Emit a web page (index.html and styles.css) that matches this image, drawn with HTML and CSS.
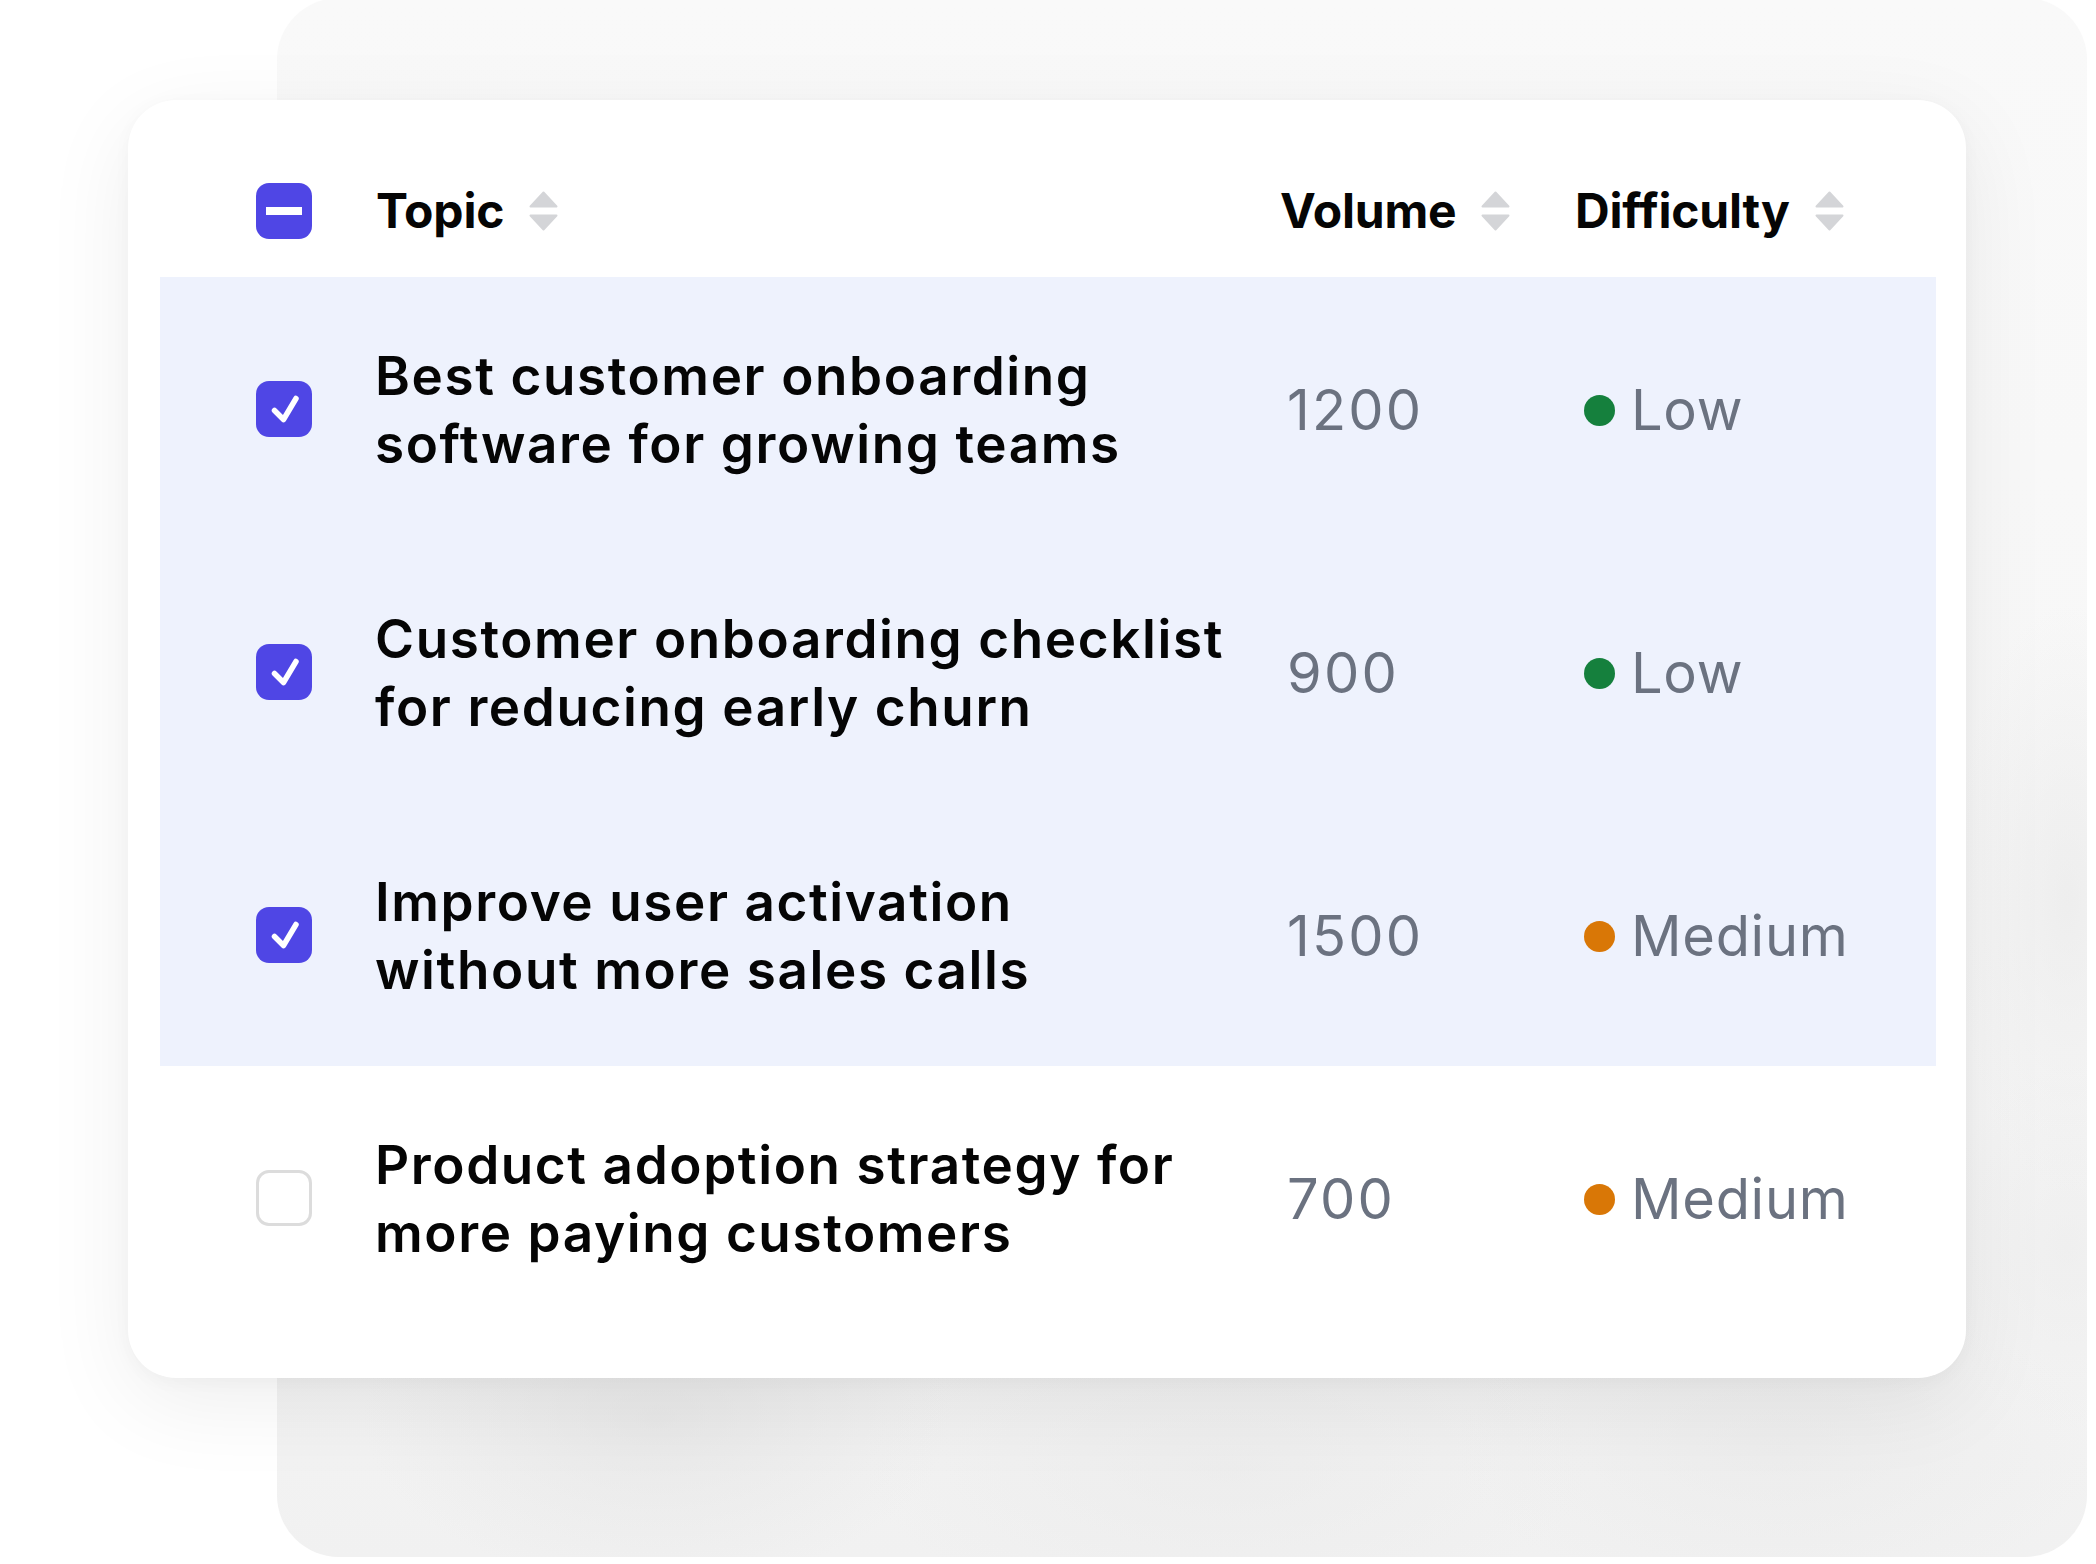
FILE: index.html
```html
<!DOCTYPE html>
<html lang="en">
<head>
<meta charset="utf-8">
<title>Topics</title>
<link rel="stylesheet" href="styles.css">
</head>
<body>
<div class="stage">
  <div class="panel"></div>
  <div class="card">
    <div class="row head">
      <div class="cell cell-check">
        <span class="cb cb-mixed"><span class="bar"></span></span>
      </div>
      <div class="cell th">
        <span>Topic</span>
        <svg class="sort" viewBox="0 0 29 40"><path d="M14.5 1.5 L27.5 15.5 L1.5 15.5 Z"/><path d="M1.5 24.5 L27.5 24.5 L14.5 38.5 Z"/></svg>
      </div>
      <div class="cell th">
        <span>Volume</span>
        <svg class="sort" viewBox="0 0 29 40"><path d="M14.5 1.5 L27.5 15.5 L1.5 15.5 Z"/><path d="M1.5 24.5 L27.5 24.5 L14.5 38.5 Z"/></svg>
      </div>
      <div class="cell th">
        <span>Difficulty</span>
        <svg class="sort" viewBox="0 0 29 40"><path d="M14.5 1.5 L27.5 15.5 L1.5 15.5 Z"/><path d="M1.5 24.5 L27.5 24.5 L14.5 38.5 Z"/></svg>
      </div>
    </div>

    <div class="row item selected">
      <div class="cell cell-check">
        <span class="cb cb-on"><svg viewBox="0 0 56 56"><path d="M18.5 29.5 L27.5 38.5 L40 17.5"/></svg></span>
      </div>
      <div class="cell title">Best customer onboarding<br>software for growing teams</div>
      <div class="cell num">1200</div>
      <div class="cell diff"><span class="dot dot-low"></span>Low</div>
    </div>

    <div class="row item selected">
      <div class="cell cell-check">
        <span class="cb cb-on"><svg viewBox="0 0 56 56"><path d="M18.5 29.5 L27.5 38.5 L40 17.5"/></svg></span>
      </div>
      <div class="cell title">Customer onboarding checklist<br>for reducing early churn</div>
      <div class="cell num">900</div>
      <div class="cell diff"><span class="dot dot-low"></span>Low</div>
    </div>

    <div class="row item selected">
      <div class="cell cell-check">
        <span class="cb cb-on"><svg viewBox="0 0 56 56"><path d="M18.5 29.5 L27.5 38.5 L40 17.5"/></svg></span>
      </div>
      <div class="cell title">Improve user activation<br>without more sales calls</div>
      <div class="cell num">1500</div>
      <div class="cell diff"><span class="dot dot-med"></span>Medium</div>
    </div>

    <div class="row item">
      <div class="cell cell-check">
        <span class="cb cb-off"></span>
      </div>
      <div class="cell title">Product adoption strategy for<br>more paying customers</div>
      <div class="cell num">700</div>
      <div class="cell diff"><span class="dot dot-med"></span>Medium</div>
    </div>
  </div>
</div>
</body>
</html>
```

FILE: styles.css
```css
* { box-sizing: border-box; }

html, body {
  margin: 0;
  padding: 0;
  background: #ffffff;
}

body {
  font-family: Inter, "Noto Sans", "Liberation Sans", sans-serif;
  color: #0a0a0a;
}

.stage {
  position: relative;
  width: 2096px;
  height: 1564px;
  overflow: hidden;
  padding: 100px 0 0 128px;
}

/* decorative backdrop panel behind the card */
.panel {
  position: absolute;
  left: 277px;
  top: -2px;
  width: 1810px;
  height: 1559px;
  border-radius: 62px;
  background:
    radial-gradient(ellipse 420px 240px at 380px 1420px, rgba(224,224,224,0.55), rgba(224,224,224,0) 70%),
    radial-gradient(ellipse 520px 220px at 950px 1470px, rgba(232,232,232,0.5), rgba(232,232,232,0) 70%),
    radial-gradient(ellipse 460px 220px at 1500px 1450px, rgba(230,230,230,0.45), rgba(230,230,230,0) 70%),
    radial-gradient(ellipse 160px 420px at 1790px 900px, rgba(230,230,230,0.55), rgba(230,230,230,0) 70%),
    radial-gradient(ellipse 180px 260px at 1790px 1250px, rgba(234,234,234,0.5), rgba(234,234,234,0) 70%),
    linear-gradient(180deg, #f9f9f9 0%, #f7f7f7 60%, #f1f1f1 100%);
}

.card {
  position: relative;
  width: 1838px;
  height: 1278px;
  background: #ffffff;
  border-radius: 48px;
  padding: 44px 30px 48px 32px;
  box-shadow: 0 24px 90px rgba(0, 0, 0, 0.07), 0 4px 18px rgba(0, 0, 0, 0.03);
}

.row {
  display: grid;
  grid-template-columns: 119px 904px 295px 1fr;
  align-items: center;
  padding-left: 96px;
}

.head {
  height: 133px;
}

.item {
  height: 263px;
}

.selected {
  background: #eef2fd;
}

.cell-check {
  display: flex;
  align-items: center;
}

.cb {
  width: 56px;
  height: 56px;
  border-radius: 13px;
  display: flex;
  align-items: center;
  justify-content: center;
}

.cb-mixed,
.cb-on {
  background: #4f46e5;
}

.cb-mixed .bar {
  width: 36px;
  height: 8px;
  background: #ffffff;
}

.cb-on svg {
  width: 56px;
  height: 56px;
}

.cb-on svg path {
  fill: none;
  stroke: #ffffff;
  stroke-width: 5.5;
  stroke-linecap: round;
  stroke-linejoin: round;
}

.cb-off {
  background: #ffffff;
  border: 3px solid #dcdcdc;
}

.th {
  display: flex;
  align-items: center;
  gap: 25px;
  font-size: 48px;
  font-weight: 700;
  color: #050505;
  letter-spacing: -0.2px;
  padding-left: 1px;
}

.sort {
  width: 29px;
  height: 40px;
  flex: none;
}

.sort path {
  fill: #d4d5d8;
  stroke: #d4d5d8;
  stroke-width: 2;
  stroke-linejoin: round;
}

.title {
  font-size: 53px;
  line-height: 68px;
  font-weight: 600;
  color: #050505;
  letter-spacing: 1.6px;
  padding-top: 3px;
}

.num {
  font-size: 56px;
  font-weight: 400;
  color: #6b7280;
  padding-left: 8px;
  letter-spacing: 2.2px;
  padding-top: 3px;
}

.diff {
  display: flex;
  align-items: center;
  font-size: 56px;
  font-weight: 400;
  color: #6b7280;
  letter-spacing: 0.7px;
  padding-top: 3px;
}

.dot {
  width: 31px;
  height: 31px;
  border-radius: 50%;
  margin-left: 10px;
  margin-right: 16px;
  flex: none;
}

.dot-low {
  background: #15803d;
}

.dot-med {
  background: #d97706;
}
```
